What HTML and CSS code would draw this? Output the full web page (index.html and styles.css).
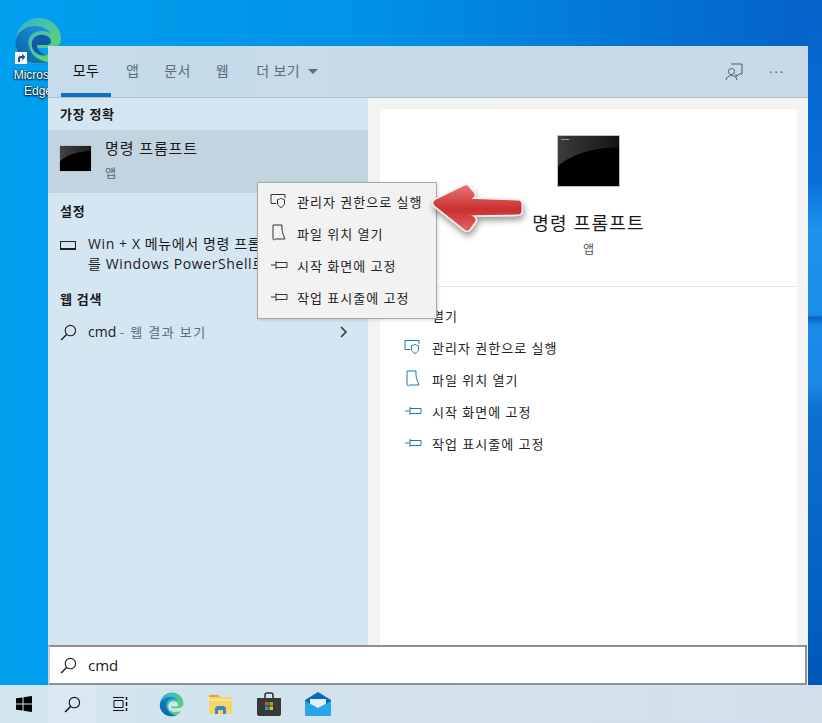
FILE: index.html
```html
<!DOCTYPE html>
<html lang="ko">
<head>
    <meta charset="UTF-8">
    <title>명령 프롬프트 검색</title>
    <link rel="stylesheet" href="styles.css">
</head>
<body>
    <svg class="svg-defs" width="0" height="0">
        <defs>
            <linearGradient id="edgeBlue" x1="0" y1="1" x2="1" y2="0">
                <stop offset="0" stop-color="#0c59a4"/>
                <stop offset="1" stop-color="#1b9de2"/>
            </linearGradient>
            <linearGradient id="edgeGreen" x1="0" y1="0" x2="1" y2="1">
                <stop offset="0" stop-color="#2fb4d6"/>
                <stop offset="1" stop-color="#6bd85c"/>
            </linearGradient>
            <linearGradient id="arrowRed" x1="0" y1="0" x2="0" y2="1">
                <stop offset="0" stop-color="#e46a6a"/>
                <stop offset=".55" stop-color="#c92f2f"/>
                <stop offset="1" stop-color="#dc5c5c"/>
            </linearGradient>
            <symbol id="edgeLogo" viewBox="0 0 48 48">
                <path d="M2 21C4 9 13 1 25 1c13 0 22 10 22 21 0 6-5 9-11 9H23c1 4 6 7 12 7 3 0 6-1 8-2-4 7-11 11-19 11C11 47 1 36 2 21z" fill="url(#edgeGreen)"/>
                <path d="M1.500 24C3 15 12 9 21 9c8 0 13 3 16 8-4-3-10-4-15-2-6 2-9 8-7 14 1 7 8 15 19 16-3 1-7 1.500-10 1.500C11 46.500 1 36 1.500 24z" fill="url(#edgeBlue)"/>
                <path d="M18 25c1-5 6-8 12-7 5 1 7 4 7 7 0 2-2 3-5 3H23c0 5 4 9 10 10-8 2-17-4-15-13z" fill="currentColor"/>
            </symbol>
            <symbol id="icoSearch" viewBox="0 0 18 18">
                <circle cx="11" cy="7" r="5.500" fill="none" stroke="currentColor" stroke-width="1.200"/>
                <path d="M7 11.200 1.200 17" fill="none" stroke="currentColor" stroke-width="1.600"/>
            </symbol>
            <symbol id="icoAdmin" viewBox="0 0 18 16">
                <path d="M6 10.500H1V1.500h14v3.500" fill="none" stroke="currentColor"/>
                <path d="M7.500 6.500c1.500 0 2.500-.5 3.500-1.500 1 1 2 1.500 3.500 1.500v3.500c0 2-1.500 3.500-3.500 4.500-2-1-3.500-2.500-3.500-4.500z" fill="none" stroke="currentColor"/>
            </symbol>
            <symbol id="icoFolder" viewBox="0 0 16 18">
                <path d="M2 1v13.500c0 1.500 1.500 1.800 2.500 .5M2 1h9c-.5 4 .5 9 3 14H4.500" fill="none" stroke="currentColor"/>
            </symbol>
            <symbol id="icoPin" viewBox="0 0 18 12">
                <path d="M1 6h5M6 2v8M6 3.500h11v5H6" fill="none" stroke="currentColor"/>
            </symbol>
        </defs>
    </svg>

    <div class="desktop">
        <div class="desktop-icon">
            <div class="desktop-logo">
                <svg class="edge-big"><use href="#edgeLogo"/></svg>
                <svg class="shortcut" viewBox="0 0 12 12">
                    <rect width="12" height="12" fill="#f4f6f8"/>
                    <path d="M3 10V6.500C3 5 4 4 5.500 4H7V2l3.500 3L7 8V6H6C5 6 5 7 5 8v2z" fill="#1f4f8c"/>
                </svg>
            </div>
            <div class="desktop-label">Microsoft Edge</div>
        </div>

        <div class="search-panel">
            <div class="panel-tabs">
                <div class="tab-list">
                    <div class="tab active">모두</div>
                    <div class="tab tab-app">앱</div>
                    <div class="tab tab-doc">문서</div>
                    <div class="tab tab-web">웹</div>
                    <div class="tab tab-more">더 보기<span class="caret"></span></div>
                </div>
                <div class="tab-tools">
                    <svg class="tool-feedback" viewBox="0 0 18 18" fill="none" stroke="#4a5a68">
                        <path d="M6 1h11v10h-3l-3 3v-3"/>
                        <circle cx="6.500" cy="8.500" r="3" fill="#c8d9e8"/>
                        <path d="M1 17c.5-3 3-4.500 5.500-4.500S11.500 14 12 17"/>
                    </svg>
                    <div class="tool-dots">···</div>
                </div>
            </div>

            <div class="panel-body">
                <div class="results">
                    <div class="group-title group-first">가장 정확</div>
                    <div class="best-match">
                        <div class="console-small"></div>
                        <div class="best-info">
                            <div class="best-name">명령 프롬프트</div>
                            <div class="best-kind">앱</div>
                        </div>
                    </div>

                    <div class="group-title group-settings">설정</div>
                    <div class="setting-row">
                        <span class="monitor-icon"></span>
                        <div class="setting-text">
                            <div>Win + X 메뉴에서 명령 프롬프트</div>
                            <div>를 Windows PowerShell로 바꾸기</div>
                        </div>
                    </div>

                    <div class="group-title">웹 검색</div>
                    <div class="web-row">
                        <svg class="row-search"><use href="#icoSearch"/></svg>
                        <div class="web-text">cmd <span class="web-hint">- 웹 결과 보기</span></div>
                        <svg class="chevron" viewBox="0 0 8 12" fill="none" stroke="#333" stroke-width="1.500">
                            <path d="M1 1l5 5-5 5"/>
                        </svg>
                    </div>
                </div>

                <div class="preview-wrap">
                    <div class="preview">
                        <div class="preview-head">
                            <div class="console-big"></div>
                            <div class="preview-name">명령 프롬프트</div>
                            <div class="preview-kind">앱</div>
                        </div>
                        <div class="preview-actions">
                            <div class="action"><span class="action-icon"></span>열기</div>
                            <div class="action"><svg class="action-icon ico-admin"><use href="#icoAdmin"/></svg>관리자 권한으로 실행</div>
                            <div class="action"><svg class="action-icon ico-folder"><use href="#icoFolder"/></svg>파일 위치 열기</div>
                            <div class="action"><svg class="action-icon ico-pin"><use href="#icoPin"/></svg>시작 화면에 고정</div>
                            <div class="action"><svg class="action-icon ico-pin"><use href="#icoPin"/></svg>작업 표시줄에 고정</div>
                        </div>
                    </div>
                </div>
            </div>

            <div class="search-box">
                <svg class="row-search"><use href="#icoSearch"/></svg>
                <span class="search-text">cmd</span>
            </div>
        </div>

        <div class="context-menu">
            <div class="menu-item"><svg class="menu-icon ico-admin"><use href="#icoAdmin"/></svg>관리자 권한으로 실행</div>
            <div class="menu-item"><svg class="menu-icon ico-folder"><use href="#icoFolder"/></svg>파일 위치 열기</div>
            <div class="menu-item"><svg class="menu-icon ico-pin"><use href="#icoPin"/></svg>시작 화면에 고정</div>
            <div class="menu-item"><svg class="menu-icon ico-pin"><use href="#icoPin"/></svg>작업 표시줄에 고정</div>
        </div>

        <svg class="callout-arrow" viewBox="0 0 110 70">
            <defs>
                <filter id="arrowShadow" x="-20%" y="-20%" width="140%" height="160%">
                    <feDropShadow dx="1" dy="4" stdDeviation="3" flood-color="#000" flood-opacity=".4"/>
                </filter>
            </defs>
            <g filter="url(#arrowShadow)" stroke-linejoin="round">
                <path class="arrow-edge" d="M9 27 38 13 43 19 33 26 90 28V35L35 36 44 44 39 51z"/>
                <path class="arrow-fill" d="M9 27 38 13 43 19 33 26 90 28V35L35 36 44 44 39 51z"/>
            </g>
        </svg>

        <div class="taskbar">
            <div class="task-btn">
                <svg class="start-logo" viewBox="0 0 16 16" fill="#000">
                    <path d="M0 2.300 6.500 1.400V7.500H0zM7.500 1.300 16 0V7.500H7.500zM0 8.500H6.500V14.600L0 13.700zM7.500 8.500H16V16L7.500 14.700z"/>
                </svg>
            </div>
            <div class="task-btn task-search">
                <svg class="bar-search"><use href="#icoSearch"/></svg>
            </div>
            <div class="task-btn">
                <svg class="task-view" viewBox="0 0 16 16" fill="none" stroke="#111">
                    <path d="M2 4.500h9v7H2zM1 1.500h11M1 14.500h11"/>
                    <path d="M14.500 1v3M14.500 6v4M14.500 12v3" stroke-width="1.500"/>
                </svg>
            </div>
            <div class="task-btn task-app task-edge">
                <svg class="app-edge"><use href="#edgeLogo"/></svg>
            </div>
            <div class="task-btn task-app">
                <svg class="app-folder" viewBox="0 0 23 22">
                    <path d="M0 2h9l2 2h12v16a1 1 0 0 1-1 1H1a1 1 0 0 1-1-1z" fill="#f6d56a"/>
                    <path d="M0 2h9l2 2H0z" fill="#e0a92e"/>
                    <path d="M0 6h23v2H0z" fill="#fbe389"/>
                    <path d="M6 21v-6l2-2h7l2 2v6h-3v-4H9v4z" fill="#3f87b8"/>
                </svg>
            </div>
            <div class="task-btn task-app">
                <svg class="app-store" viewBox="0 0 24 24">
                    <path d="M8 6V3a2 2 0 0 1 2-2h4a2 2 0 0 1 2 2v3" fill="none" stroke="#2b2b2b" stroke-width="1.500"/>
                    <path d="M0 6h24v16a2 2 0 0 1-2 2H2a2 2 0 0 1-2-2z" fill="#37383a"/>
                    <path d="M8 10h3.500v3.500H8z" fill="#e8502c"/>
                    <path d="M12.500 10H16v3.500h-3.500z" fill="#7ab92f"/>
                    <path d="M8 14.500h3.500V18H8z" fill="#1a9ce0"/>
                    <path d="M12.500 14.500H16V18h-3.500z" fill="#f5b91a"/>
                </svg>
            </div>
            <div class="task-btn task-app">
                <svg class="app-mail" viewBox="0 0 26 24">
                    <path d="M0 8 13 0l13 8v14a2 2 0 0 1-2 2H2a2 2 0 0 1-2-2z" fill="#0f68b8"/>
                    <path d="M5 7h16v8l-8 4-8-4z" fill="#dff1fb"/>
                    <path d="M0 9l13 7 13-7v13a2 2 0 0 1-2 2H2a2 2 0 0 1-2-2z" fill="#27a6ea"/>
                </svg>
            </div>
        </div>
    </div>
</body>
</html>
```

FILE: styles.css
```css
* {
    margin: 0;
    padding: 0;
    box-sizing: border-box;
}

body {
    font-family: "Open Sans", "Noto Sans CJK KR", sans-serif;
    color: #1a1a1a;
    overflow: hidden;
}

.svg-defs {
    position: absolute;
}

.desktop {
    position: relative;
    width: 822px;
    height: 723px;
    display: flex;
    flex-direction: column;
    justify-content: flex-end;
    background:
        linear-gradient(180deg, #0563c9 0, #0a6fd6 180px, #1c92ee 230px, #1a8de8 315px, #0a62bc 318px, #1a8aea 325px, #1a86e6 385px, #0d70d2 410px, #0058b8 690px) right top / 14px 100% no-repeat,
        linear-gradient(90deg, #00a0ef 0, #0092e6 45%, #0563c9 98%);
}

/* desktop shortcut */
.desktop-icon {
    position: absolute;
    left: 0;
    top: 17px;
    width: 76px;
    text-align: center;
    color: #fff;
    font-family: "Liberation Sans", sans-serif;
    font-size: 12px;
    line-height: 16px;
    text-shadow: 0 0 2px #000, 0 1px 2px #000;
}

.desktop-logo {
    position: relative;
    width: 48px;
    height: 48px;
    margin: 0 0 2px 14px;
}

.edge-big {
    width: 48px;
    height: 48px;
    color: #1058a8;
}

.shortcut {
    position: absolute;
    left: 1px;
    top: 35px;
    width: 12px;
    height: 12px;
}

.desktop-label {
    width: 60px;
    margin-left: 8px;
}

/* search window */
.search-panel {
    position: absolute;
    left: 48px;
    top: 46px;
    width: 760px;
    height: 639px;
    display: flex;
    flex-direction: column;
    background: #f3f3f3;
}

.panel-tabs {
    height: 52px;
    display: flex;
    justify-content: space-between;
    background: linear-gradient(90deg, #c6dcea, #c8d8e8);
    border-bottom: 1px solid #aebfca;
    font-size: 14px;
}

.tab-list {
    display: flex;
    padding-left: 13px;
}

.tab {
    height: 51px;
    line-height: 50px;
    color: #5d6c78;
    letter-spacing: .4px;
}

.tab.active {
    width: 50px;
    text-align: center;
    color: #111;
    border-bottom: 4px solid #0f6fc0;
}

.tab-app {
    margin-left: 15px;
}

.tab-doc {
    margin-left: 25px;
}

.tab-web {
    margin-left: 25px;
}

.tab-more {
    margin-left: 27px;
}

.caret {
    display: inline-block;
    margin-left: 8px;
    vertical-align: 2px;
    border-left: 5px solid transparent;
    border-right: 5px solid transparent;
    border-top: 5px solid #5d6c78;
}

.tab-tools {
    display: flex;
    align-items: center;
    padding-right: 24px;
    gap: 26px;
}

.tool-feedback {
    width: 18px;
    height: 18px;
    margin-top: 1px;
}

.tool-dots {
    width: 15px;
    font-size: 13px;
    color: #4a5a68;
    text-align: center;
    letter-spacing: 2px;
    line-height: 1;
    margin-top: 2px;
}

.panel-body {
    flex: 1;
    display: flex;
    min-height: 0;
}

.results {
    width: 320px;
    background: #d4e6f1;
    overflow: hidden;
}

.group-title {
    padding-left: 12px;
    font-size: 13px;
    font-weight: 700;
    line-height: 20px;
    letter-spacing: .7px;
}

.group-first {
    padding-top: 6px;
    height: 32px;
}

.best-match {
    height: 63px;
    display: flex;
    align-items: center;
    gap: 14px;
    padding-left: 12px;
    background: #c2d4df;
}

.console-small {
    width: 31px;
    height: 25px;
    margin-top: -7px;
    background:
        radial-gradient(ellipse 36px 20px at 100% 100%, #000 98%, transparent 100%),
        linear-gradient(90deg, #444, #1c1c1c);
    box-shadow: 0 0 1px #777;
}

.best-info {
    margin-top: -2px;
}

.best-name {
    margin-top: -1px;
    font-size: 15px;
    line-height: 20px;
    letter-spacing: .9px;
}

.best-kind {
    margin-top: 8px;
    font-size: 12px;
    line-height: 16px;
    color: #55636e;
}

.group-settings {
    margin-top: 8px;
}

.setting-row {
    display: flex;
    gap: 12px;
    padding: 13px 0 0 12px;
    height: 68px;
    white-space: nowrap;
}

.monitor-icon {
    width: 16px;
    height: 9px;
    margin-top: 7px;
    border: 1px solid #222;
    border-bottom-width: 2px;
}

.setting-text {
    font-size: 14px;
    line-height: 20px;
    letter-spacing: .6px;
}

.web-row {
    display: flex;
    align-items: center;
    gap: 11px;
    padding: 12px 0 0 12px;
    height: 34px;
}

.row-search {
    width: 17px;
    height: 17px;
    color: #222;
    flex: none;
}

.web-text {
    flex: 1;
    font-size: 14px;
    line-height: 20px;
}

.web-hint {
    font-size: 13px;
    letter-spacing: 1.4px;
    color: #5d6c78;
}

.chevron {
    width: 8px;
    height: 12px;
    margin-right: 20px;
}

.preview-wrap {
    flex: 1;
    padding: 11px 11px 0 12px;
}

.preview {
    height: 100%;
    background: #fff;
}

.preview-head {
    height: 178px;
    border-bottom: 1px solid #e8e8e8;
    text-align: center;
    padding-top: 26px;
}

.console-big {
    width: 63px;
    height: 52px;
    margin: 0 auto;
    border: 1px solid #c2c2c2;
    background:
        linear-gradient(#9a9a9a, #9a9a9a) 3px 3px / 8px 1px no-repeat,
        radial-gradient(ellipse 72px 39px at 100% 100%, #000 98%, transparent 100%),
        linear-gradient(90deg, #3c3c3c, #141414);
}

.preview-name {
    margin-top: 23px;
    font-size: 18px;
    line-height: 26px;
    letter-spacing: 1.2px;
}

.preview-kind {
    margin-top: 5px;
    font-size: 12px;
    line-height: 18px;
    color: #555;
}

.preview-actions {
    padding: 12px 0 0 24px;
}

.action {
    height: 32px;
    display: flex;
    align-items: center;
    font-size: 13px;
    letter-spacing: 1px;
    color: #222;
}

.action-icon {
    flex: none;
    width: 18px;
    margin-right: 10px;
    color: #1f78b4;
}

.ico-admin {
    height: 16px;
}

.ico-folder {
    height: 18px;
}

.ico-pin {
    height: 12px;
}

.search-box {
    height: 40px;
    display: flex;
    align-items: center;
    gap: 11px;
    padding-left: 10px;
    background: #fff;
    border: 2px solid #909090;
    border-left-color: #c9d3d8;
    margin-right: 1px;
}

.search-text {
    font-size: 15px;
}

/* right click menu */
.context-menu {
    position: absolute;
    left: 257px;
    top: 182px;
    width: 180px;
    height: 137px;
    padding: 2px 0;
    background: #f2f2f2;
    border: 1px solid #a8a8a8;
    box-shadow: 1px 1px 3px rgba(0, 0, 0, .15);
}

.menu-item {
    height: 32px;
    display: flex;
    align-items: center;
    padding-left: 12px;
    font-size: 13px;
    letter-spacing: 1px;
    color: #222;
}

.menu-icon {
    flex: none;
    width: 18px;
    margin-right: 9px;
    color: #333;
}

.callout-arrow {
    position: absolute;
    left: 428px;
    top: 176px;
    width: 110px;
    height: 70px;
}

.arrow-edge {
    fill: #f5eeee;
    stroke: #f5eeee;
    stroke-width: 10;
}

.arrow-fill {
    fill: url(#arrowRed);
    stroke: url(#arrowRed);
    stroke-width: 7;
}

/* taskbar */
.taskbar {
    height: 38px;
    display: flex;
    background: linear-gradient(90deg, #d2e5ef, #d4dfec);
}

.task-btn {
    width: 48px;
    display: flex;
    align-items: center;
    justify-content: center;
}

.task-app {
    width: 49px;
}

.task-edge {
    margin-left: 2.5px;
}

.task-search {
    background: #d9e8f1;
}

.start-logo {
    width: 16px;
    height: 16px;
}

.bar-search {
    width: 17px;
    height: 17px;
    color: #111;
}

.task-view {
    width: 16px;
    height: 16px;
}

.app-edge {
    width: 25px;
    height: 25px;
    color: #d3e5ef;
}

.app-folder {
    width: 23px;
    height: 22px;
}

.app-store {
    width: 24px;
    height: 24px;
}

.app-mail {
    width: 26px;
    height: 24px;
}
```
